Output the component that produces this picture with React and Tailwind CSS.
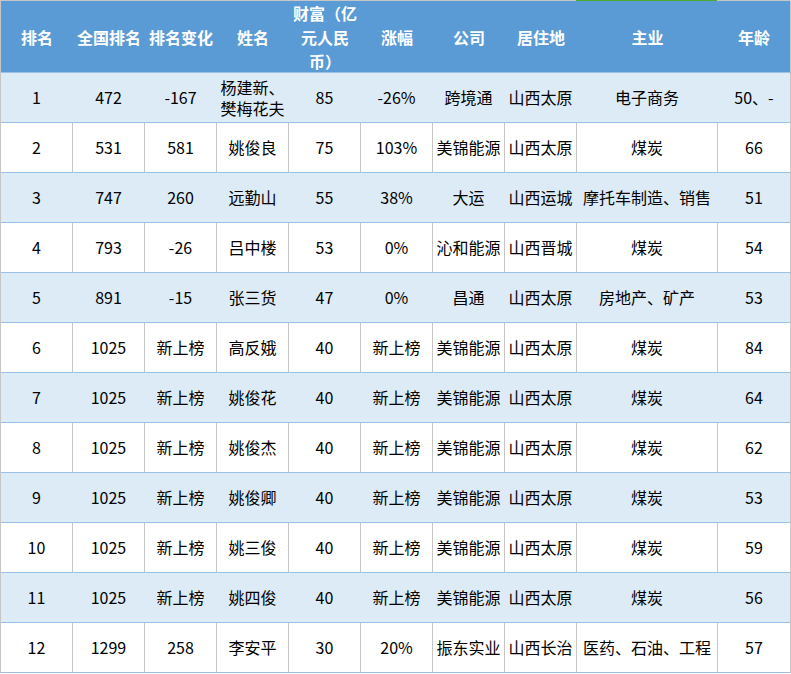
import React from "react";

const rows = [
  ["1", "472", "-167", "杨建新、樊梅花夫", "85", "-26%", "跨境通", "山西太原", "电子商务", "50、-"],
  ["2", "531", "581", "姚俊良", "75", "103%", "美锦能源", "山西太原", "煤炭", "66"],
  ["3", "747", "260", "远勤山", "55", "38%", "大运", "山西运城", "摩托车制造、销售", "51"],
  ["4", "793", "-26", "吕中楼", "53", "0%", "沁和能源", "山西晋城", "煤炭", "54"],
  ["5", "891", "-15", "张三货", "47", "0%", "昌通", "山西太原", "房地产、矿产", "53"],
  ["6", "1025", "新上榜", "高反娥", "40", "新上榜", "美锦能源", "山西太原", "煤炭", "84"],
  ["7", "1025", "新上榜", "姚俊花", "40", "新上榜", "美锦能源", "山西太原", "煤炭", "64"],
  ["8", "1025", "新上榜", "姚俊杰", "40", "新上榜", "美锦能源", "山西太原", "煤炭", "62"],
  ["9", "1025", "新上榜", "姚俊卿", "40", "新上榜", "美锦能源", "山西太原", "煤炭", "53"],
  ["10", "1025", "新上榜", "姚三俊", "40", "新上榜", "美锦能源", "山西太原", "煤炭", "59"],
  ["11", "1025", "新上榜", "姚四俊", "40", "新上榜", "美锦能源", "山西太原", "煤炭", "56"],
  ["12", "1299", "258", "李安平", "30", "20%", "振东实业", "山西长治", "医药、石油、工程", "57"],
];

const headers = [
  "排名",
  "全国排名",
  "排名变化",
  "姓名",
  <>
    财富（亿
    <br />
    元人民
    <br />
    币）
  </>,
  "涨幅",
  "公司",
  "居住地",
  "主业",
  "年龄",
];

const widths = [
  "w-[72px]", "w-[72px]", "w-[72px]", "w-[72px]", "w-[72px]",
  "w-[72px]", "w-[72px]", "w-[72px]", "w-[141px]", "w-[72px]",
];

export default function App() {
  return (
    <div className="w-[791px] h-[674px] overflow-hidden bg-white font-['Noto_Sans_CJK_SC',sans-serif]">
      <div className="flex h-px">
        <div className="w-[576px] bg-[#c6c6c6]" />
        <div className="w-[141px] bg-[#4ea72e]" />
        <div className="flex-1 bg-[#c6c6c6]" />
      </div>
      <div className="border-l border-r border-[#c6c6c6] w-[791px]">
        <div className="flex h-[72px] bg-[#5b9bd5] border-b border-[#9bc2e6]">
          {headers.map((h, i) => (
            <div
              key={i}
              className={`${widths[i]} shrink-0 flex items-center justify-center text-center text-white font-bold text-[16px] leading-[24px] whitespace-nowrap`}
            >
              <div>{h}</div>
            </div>
          ))}
        </div>
        {rows.map((r, ri) => {
          const blue = ri % 2 === 0;
          return (
            <div
              key={ri}
              className={`flex h-[50px] border-b border-[#9bc2e6] ${blue ? "bg-[#ddebf7]" : "bg-white"}`}
            >
              {r.map((c, ci) => (
                <div
                  key={ci}
                  className={`${widths[ci]} shrink-0 flex items-center justify-center text-center text-black text-[16px] leading-[21px] border-r ${
                    blue ? "border-transparent" : "border-[#c6c6c6]"
                  } ${ci === 9 ? "border-r-0" : ""}`}
                >
                  {c}
                </div>
              ))}
            </div>
          );
        })}
      </div>
    </div>
  );
}
